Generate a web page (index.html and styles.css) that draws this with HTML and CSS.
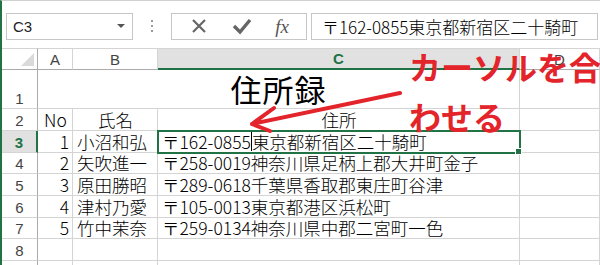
FILE: index.html
```html
<!DOCTYPE html>
<html lang="ja">
<head>
    <meta charset="UTF-8">
    <title>住所録</title>
    <link rel="stylesheet" href="styles.css">
</head>
<body>
    <div class="window">
        <div class="formula-bar">
            <div class="name-box">
                <span>C3</span>
                <span class="drop"></span>
            </div>
            <div class="grip"><i></i><i></i><i></i></div>
            <div class="fx-buttons">
                <svg class="btn" width="20" height="20" viewBox="0 0 20 20"><path d="M4 4 L16 16 M16 4 L4 16" stroke="#666" stroke-width="2.2" fill="none"/></svg>
                <svg class="btn" width="22" height="20" viewBox="0 0 22 20"><path d="M3 10 L9 16 L19 4" stroke="#666" stroke-width="3.4" fill="none"/></svg>
                <span class="fx">fx</span>
            </div>
            <div class="formula-input">〒162-0855東京都新宿区二十騎町</div>
        </div>

        <div class="sheet">
            <div class="corner"></div>
            <div class="col-head">A</div>
            <div class="col-head">B</div>
            <div class="col-head active">C</div>
            <div class="col-head">D</div>

            <div class="row-head">1</div>
            <div class="cell title">住所録</div>
            <div class="cell"></div>

            <div class="row-head">2</div>
            <div class="cell center">No</div>
            <div class="cell center">氏名</div>
            <div class="cell center">住所</div>
            <div class="cell"></div>

            <div class="row-head active">3</div>
            <div class="cell num">1</div>
            <div class="cell">小沼和弘</div>
            <div class="cell selected">〒162-0855<span class="caret"></span>東京都新宿区二十騎町<span class="handle"></span></div>
            <div class="cell"></div>

            <div class="row-head">4</div>
            <div class="cell num">2</div>
            <div class="cell">矢吹進一</div>
            <div class="cell">〒258-0019神奈川県足柄上郡大井町金子</div>
            <div class="cell"></div>

            <div class="row-head">5</div>
            <div class="cell num">3</div>
            <div class="cell">原田勝昭</div>
            <div class="cell">〒289-0618千葉県香取郡東庄町谷津</div>
            <div class="cell"></div>

            <div class="row-head">6</div>
            <div class="cell num">4</div>
            <div class="cell">津村乃愛</div>
            <div class="cell">〒105-0013東京都港区浜松町</div>
            <div class="cell"></div>

            <div class="row-head">7</div>
            <div class="cell num">5</div>
            <div class="cell">竹中茉奈</div>
            <div class="cell">〒259-0134神奈川県中郡二宮町一色</div>
            <div class="cell"></div>

            <div class="row-head">8</div>
            <div class="cell"></div>
            <div class="cell"></div>
            <div class="cell"></div>
            <div class="cell"></div>

            <div class="row-head"></div>
            <div class="cell"></div>
            <div class="cell"></div>
            <div class="cell"></div>
            <div class="cell"></div>
        </div>

        <!-- annotation drawn over the sheet -->
        <svg class="arrow" width="600" height="265" viewBox="0 0 600 265">
            <path d="M400 93 L252 124 M274 108 L252 124 L270 131" stroke="#e3242b" stroke-width="4" stroke-linecap="round" stroke-linejoin="round" fill="none"/>
        </svg>
        <div class="callout">カーソルを合<br>わせる</div>
    </div>
</body>
</html>
```

FILE: styles.css
```css
body {
    margin: 0;
    background: #fff;
    font-family: "Noto Sans CJK JP", "Noto Sans", sans-serif;
    color: #000;
}
.window {
    position: relative;
    width: 600px;
    height: 265px;
    overflow: hidden;
    border-top: 1px solid #d0d0d0;
    border-left: 2px solid #217346;
    box-sizing: border-box;
}

/* formula bar */
.formula-bar {
    display: flex;
    align-items: center;
    height: 47px;
    padding-left: 4px;
    box-sizing: border-box;
    padding-top: 3px;
}
.name-box {
    display: flex;
    align-items: center;
    justify-content: space-between;
    width: 127px;
    height: 27px;
    border: 1px solid #c6c6c6;
    box-sizing: border-box;
    padding: 0 7px 0 6px;
    font-family: "Liberation Sans", sans-serif;
    font-size: 15px;
    color: #222;
}
.drop {
    width: 0;
    height: 0;
    border-left: 4px solid transparent;
    border-right: 4px solid transparent;
    border-top: 4px solid #555;
}
.grip {
    display: flex;
    flex-direction: column;
    gap: 3px;
    margin: 0 18px;
}
.grip i {
    display: block;
    width: 2px;
    height: 2px;
    background: #999;
}
.fx-buttons {
    display: flex;
    align-items: center;
    justify-content: space-around;
    width: 136px;
    height: 27px;
    border: 1px solid #c6c6c6;
    box-sizing: border-box;
    padding: 0 6px;
}
.fx {
    font-family: "Liberation Serif", serif;
    font-style: italic;
    font-size: 19px;
    color: #555;
    line-height: 1;
}
.formula-input {
    flex: 1;
    height: 27px;
    margin: 0 2px 0 4px;
    border: 1px solid #c6c6c6;
    box-sizing: border-box;
    padding-left: 10px;
    font-size: 17px;
    font-weight: 300;
    line-height: 25px;
    white-space: nowrap;
    overflow: hidden;
}

/* sheet grid */
.sheet {
    display: grid;
    grid-template-columns: 36px 35px 85px 362px 80px;
    grid-template-rows: 22px 39px 22px 22px 21px 22px 22px 21px 22px 10px;
}
.corner {
    position: relative;
    border-right: 1px solid #ababab;
    border-bottom: 1px solid #ababab;
    border-top: 1px solid #d4d4d4;
}
.corner::after {
    content: "";
    position: absolute;
    right: 3px;
    bottom: 3px;
    border-left: 13px solid transparent;
    border-bottom: 13px solid #dadada;
}
.col-head {
    display: flex;
    align-items: center;
    justify-content: center;
    border-top: 1px solid #d4d4d4;
    border-right: 1px solid #d4d4d4;
    border-bottom: 1px solid #ababab;
    font-family: "Liberation Sans", sans-serif;
    font-size: 15px;
    color: #444;
}
.col-head.active {
    background: #e1e1e1;
    border-bottom: 2px solid #217346;
    color: #217346;
    font-weight: bold;
}
.row-head {
    display: flex;
    align-items: flex-end;
    justify-content: center;
    padding-bottom: 1px;
    border-right: 1px solid #ababab;
    border-bottom: 1px solid #d4d4d4;
    font-family: "Liberation Sans", sans-serif;
    font-size: 15px;
    line-height: 17px;
    color: #444;
}
.row-head.active {
    background: #e1e1e1;
    border-right: 2px solid #217346;
    color: #217346;
    font-weight: bold;
}
.cell {
    position: relative;
    display: flex;
    align-items: flex-end;
    padding: 0 3px 1px 4px;
    border-right: 1px solid #d4d4d4;
    border-bottom: 1px solid #d4d4d4;
    font-size: 17.5px;
    font-weight: 300;
    line-height: 19px;
    white-space: nowrap;
}
.cell.center {
    justify-content: center;
}
.cell.num {
    justify-content: flex-end;
}
.cell.title {
    grid-column: span 3;
    justify-content: center;
    padding-bottom: 1px;
    padding-left: 0;
    padding-right: 0;
    font-size: 31px;
    font-weight: normal;
    line-height: 36px;
    letter-spacing: 1px;
}
.cell.selected {
    outline: 2px solid #217346;
    outline-offset: -1px;
    z-index: 1;
}
.caret {
    display: inline-block;
    width: 1px;
    height: 19px;
    background: #000;
}
.handle {
    position: absolute;
    right: -3px;
    bottom: -3px;
    width: 5px;
    height: 5px;
    background: #217346;
    border: 1px solid #fff;
}

/* annotation */
.arrow {
    position: absolute;
    left: -2px;
    top: -1px;
    z-index: 2;
}
.callout {
    position: absolute;
    left: 407px;
    top: 40px;
    z-index: 3;
    font-size: 32px;
    font-weight: bold;
    line-height: 50px;
    color: #e3242b;
    white-space: nowrap;
}
```
